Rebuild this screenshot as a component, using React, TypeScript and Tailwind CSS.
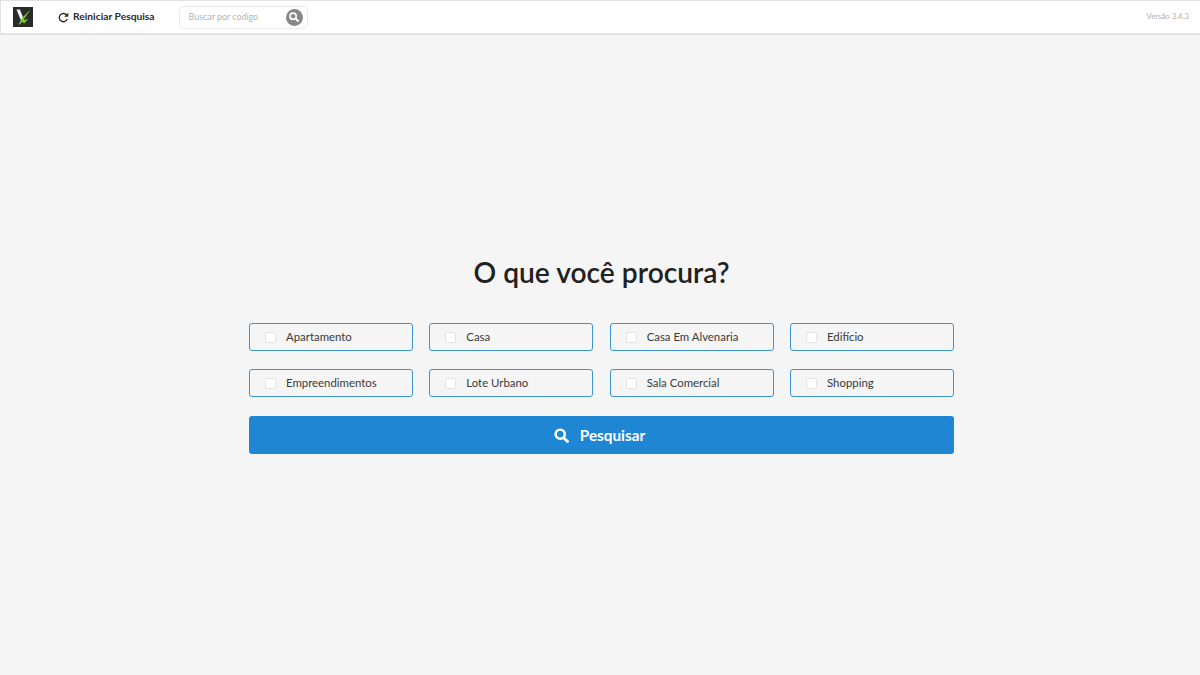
const items = ["Apartamento", "Casa", "Casa Em Alvenaria", "Edifício", "Empreendimentos", "Lote Urbano", "Sala Comercial", "Shopping"];

function SearchIcon({ className }: { className?: string }) {
  return (
    <svg viewBox="0 0 16 16" className={className} fill="none" stroke="currentColor" strokeWidth="2.6" strokeLinecap="round">
      <circle cx="6.6" cy="6.6" r="4.9" />
      <path d="M10.6 10.6 14.4 14.4" strokeWidth="3" />
    </svg>
  );
}

function RedoIcon({ className }: { className?: string }) {
  return (
    <svg viewBox="0 0 16 16" className={className} fill="none">
      <path d="M12.6 4.4A6 6 0 1 0 13.6 10" stroke="currentColor" strokeWidth="2" />
      <path d="M15 1v6H9z" fill="currentColor" />
    </svg>
  );
}

function Logo() {
  return (
    <svg viewBox="0 0 20 20" className="w-[20px] h-[20px] block">
      <rect width="20" height="20" fill="#2a2c2a" />
      <path d="M3.5 2.5h3.4l5 12.5H8.6z" fill="#f2f2f2" />
      <path d="M17.5 2.5 12.5 10 7 17.5l-1.5-.3L9.5 10.5z" fill="#7cc42a" />
      <path d="M8.5 13.5 15.5 12 11 16.5z" fill="#7cc42a" />
    </svg>
  );
}

export default function App() {
  return (
    <div className="min-h-[675px] bg-[#f5f5f5] flex flex-col font-['Lato','Liberation_Sans',sans-serif]">
      <header className="h-[35px] shrink-0 bg-white border-l border-t border-b-2 border-[#e2e2e2] flex items-center pl-[12px] pr-[11px]">
        <Logo />
        <div className="ml-[25px] flex items-center gap-[4px] text-[#2a2a2a] text-[10.25px] font-bold">
          <RedoIcon className="w-[11px] h-[11px]" />
          <span>Reiniciar Pesquisa</span>
        </div>
        <div className="ml-[24px] w-[129px] h-[23px] bg-white border border-[#ebebeb] rounded-[5px] flex items-center justify-between pl-[9px] pr-[4px]">
          <span className="text-[8.9px] text-[#b5b5b5]">Buscar por codigo</span>
          <span className="w-[17px] h-[17px] rounded-full bg-[#888888] flex items-center justify-center text-white">
            <SearchIcon className="w-[10px] h-[10px]" />
          </span>
        </div>
        <span className="ml-auto text-[7.8px] text-[#b0b0b0]">Versão 3.4.3</span>
      </header>
      <main className="flex flex-col items-center pt-[218px] pl-[3px]">
        <h1 className="text-[28.2px] leading-[38px] font-semibold text-[#212121]">O que você procura?</h1>
        <div className="mt-[32px] w-[705px]">
          <div className="w-[705px] grid grid-cols-4 gap-x-[16.33px] gap-y-[18px]">
            {items.map((t) => (
              <div key={t} className="h-[28px] border border-[#3b94da] rounded-[3px] flex items-center pl-[15px] gap-[10px] text-[11.4px] text-[#3a3a3a]">
                <span className="w-[11px] h-[11px] bg-white border border-[#e4e4e4] rounded-[2px] shrink-0" />
                <span>{t}</span>
              </div>
            ))}
          </div>
          <button className="mt-[19px] w-[705px] h-[38px] pr-[4px] bg-[#1f86d3] rounded-[3px] text-white flex items-center justify-center gap-[11px] text-[15.3px] font-bold">
            <SearchIcon className="w-[15px] h-[15px]" />
            <span>Pesquisar</span>
          </button>
        </div>
      </main>
    </div>
  );
}
